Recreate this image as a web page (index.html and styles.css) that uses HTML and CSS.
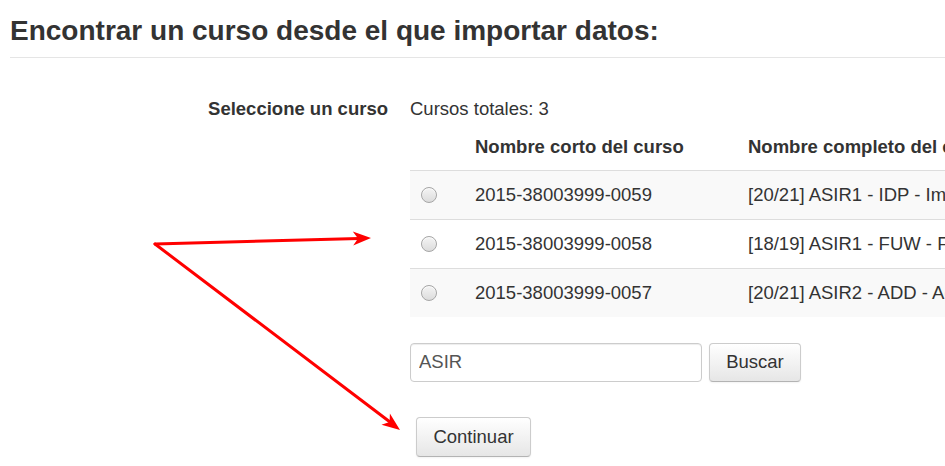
FILE: index.html
```html
<!DOCTYPE html>
<html lang="es">
<head>
<meta charset="utf-8">
<title>Importar datos</title>
<link rel="stylesheet" href="styles.css">
</head>
<body>
<div class="page">
  <h2 class="title">Encontrar un curso desde el que importar datos:</h2>
  <div class="form-row">
    <div class="label">Seleccione un curso</div>
    <div class="field">
      <div class="total">Cursos totales: 3</div>
      <table class="courses">
        <thead>
          <tr><th class="c-radio"></th><th class="c-short">Nombre corto del curso</th><th class="c-full">Nombre completo del curso</th></tr>
        </thead>
        <tbody>
          <tr class="odd"><td class="c-radio"><input type="radio" name="c" class="radio"></td><td>2015-38003999-0059</td><td>[20/21] ASIR1 - IDP - Implantación de sistemas operativos</td></tr>
          <tr><td class="c-radio"><input type="radio" name="c" class="radio"></td><td>2015-38003999-0058</td><td>[18/19] ASIR1 - FUW - Fundamentos de hardware</td></tr>
          <tr class="odd"><td class="c-radio"><input type="radio" name="c" class="radio"></td><td>2015-38003999-0057</td><td>[20/21] ASIR2 - ADD - Administración de sistemas operativos</td></tr>
        </tbody>
      </table>
      <div class="search">
        <input type="text" class="search-input" value="ASIR">
        <button class="btn btn-search">Buscar</button>
      </div>
      <div class="actions">
        <button class="btn btn-continue">Continuar</button>
      </div>
    </div>
  </div>
</div>
<svg class="arrows" width="945" height="466" viewBox="0 0 945 466" xmlns="http://www.w3.org/2000/svg">
  <line x1="155" y1="244" x2="359" y2="238.4" stroke="#ff0000" stroke-width="3" stroke-linecap="round"/>
  <polygon points="371,238 352.8,231.5 358,238.4 353.2,245.5" fill="#ff0000"/>
  <line x1="155" y1="244" x2="390" y2="422" stroke="#ff0000" stroke-width="3" stroke-linecap="round"/>
  <polygon points="400,430 381.5,424.7 389.6,422.1 389.9,413.5" fill="#ff0000"/>
</svg>
</body>
</html>
```

FILE: styles.css
```css
html, body {
  margin: 0;
  padding: 0;
  background: #fff;
  overflow: hidden;
}
body {
  font-family: "Liberation Sans", Arial, sans-serif;
  font-size: 18.5px;
  line-height: 26px;
  color: #333;
  width: 945px;
  height: 466px;
  position: relative;
}
.page {
  padding-left: 10px;
}
.title {
  margin: 14px 0 0;
  padding-bottom: 9px;
  font-size: 28px;
  line-height: 33.6px;
  font-weight: bold;
  color: #333;
  border-bottom: 1px solid #e5e5e5;
  white-space: nowrap;
}
.form-row {
  display: flex;
  margin-top: 38px;
  gap: 22px;
}
.label {
  width: 378px;
  flex: none;
  text-align: right;
  font-weight: bold;
}
.field {
  flex: none;
}
.courses {
  border-collapse: collapse;
  white-space: nowrap;
}
.courses th, .courses td {
  padding: 11px 10px;
  text-align: left;
  vertical-align: middle;
}
.courses th {
  font-weight: bold;
  padding-top: 12px;
  padding-bottom: 10px;
}
.courses td {
  border-top: 1px solid #ddd;
}
.courses .odd td {
  background: #f9f9f9;
}
.c-radio {
  width: 35px;
}
.c-short {
  width: 253px;
}
.c-full {
  width: 600px;
}
.radio {
  appearance: none;
  -webkit-appearance: none;
  margin: 0 0 0 1px;
  width: 16px;
  height: 16px;
  border-radius: 50%;
  border: 1px solid #a6a6a6;
  background: linear-gradient(#f4f4f4, #dcdcdc);
  display: block;
  box-sizing: border-box;
  box-shadow: inset 0 1px 1px rgba(255,255,255,0.8);
}
.search {
  display: flex;
  margin-top: 26px;
  gap: 7px;
}
.search-input {
  width: 292px;
  height: 39px;
  box-sizing: border-box;
  border: 1px solid #ccc;
  border-radius: 4px;
  padding: 0 8px;
  font-family: inherit;
  font-size: 18.5px;
  color: #555;
  box-shadow: inset 0 1px 1px rgba(0,0,0,0.075);
  margin: 0;
}
.btn {
  height: 39px;
  box-sizing: border-box;
  border: 1px solid #ccc;
  border-bottom-color: #b3b3b3;
  border-radius: 4px;
  background: linear-gradient(#ffffff, #e6e6e6);
  box-shadow: inset 0 1px 0 rgba(255,255,255,0.2), 0 1px 2px rgba(0,0,0,0.05);
  font-family: inherit;
  font-size: 18.5px;
  color: #333;
  margin: 0;
  padding: 0 15px;
}
.btn-search {
  width: 92px;
}
.actions {
  margin-top: 35px;
  padding-left: 6px;
}
.btn-continue {
  height: 40px;
  width: 115px;
}
.arrows {
  position: absolute;
  left: 0;
  top: 0;
  pointer-events: none;
}
```
